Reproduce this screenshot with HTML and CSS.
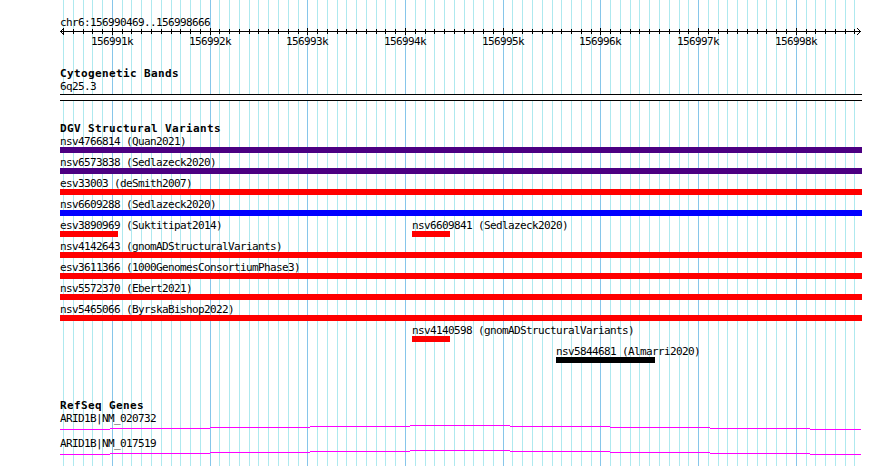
FILE: index.html
```html
<!DOCTYPE html>
<html lang="en">
<head>
	<meta charset="UTF-8">
	<title>chr6:156990469..156998666</title>
	<link rel="stylesheet" href="styles.css">
</head>
<body>
	<div class="panel">
		<!-- grid: one line per 100 bp, darker every 1 kb -->
		<svg class="grid" width="802" height="466" shape-rendering="crispEdges">
			<path class="minor" d="M3.5 0V466M13.5 0V466M23.5 0V466M32.5 0V466M42.5 0V466M62.5 0V466M71.5 0V466M81.5 0V466M91.5 0V466M101.5 0V466M111.5 0V466M120.5 0V466M130.5 0V466M140.5 0V466M159.5 0V466M169.5 0V466M179.5 0V466M189.5 0V466M198.5 0V466M208.5 0V466M218.5 0V466M228.5 0V466M238.5 0V466M257.5 0V466M267.5 0V466M277.5 0V466M286.5 0V466M296.5 0V466M306.5 0V466M316.5 0V466M325.5 0V466M335.5 0V466M355.5 0V466M365.5 0V466M374.5 0V466M384.5 0V466M394.5 0V466M404.5 0V466M413.5 0V466M423.5 0V466M433.5 0V466M452.5 0V466M462.5 0V466M472.5 0V466M482.5 0V466M492.5 0V466M501.5 0V466M511.5 0V466M521.5 0V466M531.5 0V466M550.5 0V466M560.5 0V466M570.5 0V466M579.5 0V466M589.5 0V466M599.5 0V466M609.5 0V466M619.5 0V466M628.5 0V466M648.5 0V466M658.5 0V466M667.5 0V466M677.5 0V466M687.5 0V466M697.5 0V466M706.5 0V466M716.5 0V466M726.5 0V466M746.5 0V466M755.5 0V466M765.5 0V466M775.5 0V466M785.5 0V466M794.5 0V466"/>
			<path class="major" d="M52.5 0V466M150.5 0V466M247.5 0V466M345.5 0V466M443.5 0V466M540.5 0V466M638.5 0V466M736.5 0V466"/>
		</svg>

		<div class="ruler">
			<div class="ruler-title">chr6:156990469..156998666</div>
			<svg class="scale" width="802" height="22">
				<g shape-rendering="crispEdges">
					<path d="M0 5.5H801"/>
					<path d="M3.5 3v5M13.5 3v5M23.5 3v5M32.5 3v5M42.5 3v5M62.5 3v5M71.5 3v5M81.5 3v5M91.5 3v5M101.5 3v5M111.5 3v5M120.5 3v5M130.5 3v5M140.5 3v5M159.5 3v5M169.5 3v5M179.5 3v5M189.5 3v5M198.5 3v5M208.5 3v5M218.5 3v5M228.5 3v5M238.5 3v5M257.5 3v5M267.5 3v5M277.5 3v5M286.5 3v5M296.5 3v5M306.5 3v5M316.5 3v5M325.5 3v5M335.5 3v5M355.5 3v5M365.5 3v5M374.5 3v5M384.5 3v5M394.5 3v5M404.5 3v5M413.5 3v5M423.5 3v5M433.5 3v5M452.5 3v5M462.5 3v5M472.5 3v5M482.5 3v5M492.5 3v5M501.5 3v5M511.5 3v5M521.5 3v5M531.5 3v5M550.5 3v5M560.5 3v5M570.5 3v5M579.5 3v5M589.5 3v5M599.5 3v5M609.5 3v5M619.5 3v5M628.5 3v5M648.5 3v5M658.5 3v5M667.5 3v5M677.5 3v5M687.5 3v5M697.5 3v5M706.5 3v5M716.5 3v5M726.5 3v5M746.5 3v5M755.5 3v5M765.5 3v5M775.5 3v5M785.5 3v5M794.5 3v5"/>
					<path d="M52.5 2v7M150.5 2v7M247.5 2v7M345.5 2v7M443.5 2v7M540.5 2v7M638.5 2v7M736.5 2v7"/>
				</g>
				<path class="arrow" d="M4 2L0.5 5.5L4 9M797 2L800.5 5.5L797 9"/>
				<text x="52" y="19">156991k</text>
				<text x="150" y="19">156992k</text>
				<text x="247" y="19">156993k</text>
				<text x="345" y="19">156994k</text>
				<text x="443" y="19">156995k</text>
				<text x="540" y="19">156996k</text>
				<text x="638" y="19">156997k</text>
				<text x="736" y="19">156998k</text>
			</svg>
		</div>

		<section class="track cyto">
			<h2>Cytogenetic Bands</h2>
			<div class="label">6q25.3</div>
			<div class="band"></div>
		</section>

		<section class="track dgv">
			<h2>DGV Structural Variants</h2>
			<div class="row">
				<div class="feature" style="left:0;width:802px"><div class="label">nsv4766814 (Quan2021)</div><div class="bar indigo"></div></div>
			</div>
			<div class="row">
				<div class="feature" style="left:0;width:802px"><div class="label">nsv6573838 (Sedlazeck2020)</div><div class="bar indigo"></div></div>
			</div>
			<div class="row">
				<div class="feature" style="left:0;width:802px"><div class="label">esv33003 (deSmith2007)</div><div class="bar red"></div></div>
			</div>
			<div class="row">
				<div class="feature" style="left:0;width:802px"><div class="label">nsv6609288 (Sedlazeck2020)</div><div class="bar blue"></div></div>
			</div>
			<div class="row">
				<div class="feature" style="left:0;width:58px"><div class="label">esv3890969 (Suktitipat2014)</div><div class="bar red"></div></div>
				<div class="feature" style="left:352px;width:38px"><div class="label">nsv6609841 (Sedlazeck2020)</div><div class="bar red"></div></div>
			</div>
			<div class="row">
				<div class="feature" style="left:0;width:802px"><div class="label">nsv4142643 (gnomADStructuralVariants)</div><div class="bar red"></div></div>
			</div>
			<div class="row">
				<div class="feature" style="left:0;width:802px"><div class="label">esv3611366 (1000GenomesConsortiumPhase3)</div><div class="bar red"></div></div>
			</div>
			<div class="row">
				<div class="feature" style="left:0;width:802px"><div class="label">nsv5572370 (Ebert2021)</div><div class="bar red"></div></div>
			</div>
			<div class="row">
				<div class="feature" style="left:0;width:802px"><div class="label">nsv5465066 (ByrskaBishop2022)</div><div class="bar red"></div></div>
			</div>
			<div class="row">
				<div class="feature" style="left:352px;width:38px"><div class="label">nsv4140598 (gnomADStructuralVariants)</div><div class="bar red"></div></div>
			</div>
			<div class="row">
				<div class="feature" style="left:496px;width:99px"><div class="label">nsv5844681 (Almarri2020)</div><div class="bar black"></div></div>
			</div>
		</section>

		<section class="track refseq">
			<h2>RefSeq Genes</h2>
			<div class="gene">
				<div class="label">ARID1B|NM_020732</div>
				<svg class="hat" width="802" height="12" shape-rendering="crispEdges"><path d="M0 4.5h50M50 3.5h100M150 2.5h100M250 1.5h100M350 0.5h100M450 1.5h100M550 2.5h100M650 3.5h100M750 4.5h51"/></svg>
			</div>
			<div class="gene">
				<div class="label">ARID1B|NM_017519</div>
				<svg class="hat" width="802" height="12" shape-rendering="crispEdges"><path d="M0 4.5h50M50 3.5h100M150 2.5h100M250 1.5h100M350 0.5h100M450 1.5h100M550 2.5h100M650 3.5h100M750 4.5h51"/></svg>
			</div>
		</section>
	</div>
</body>
</html>
```

FILE: styles.css
```css
html {
	background-color: #fff;
}
body {
	margin: 0;
	font-family: "DejaVu Sans Mono", "Liberation Mono", monospace;
	font-size: 11px;
	letter-spacing: -0.62px;
	color: #000;
}
.panel {
	position: relative;
	margin-left: 60px;
	width: 802px;
	height: 466px;
}
.grid {
	position: absolute;
	top: 0;
	left: 0;
}
.grid .minor {
	stroke: #aee9ef;
	stroke-width: 1;
}
.grid .major {
	stroke: #86c6ea;
	stroke-width: 1;
}

/* ruler */
.ruler {
	position: relative;
	padding-top: 16px;
}
.ruler-title {
	line-height: 13px;
	white-space: nowrap;
}
.scale {
	display: block;
	margin-top: -3px;
	overflow: visible;
}
.scale path {
	stroke: #000;
	stroke-width: 1;
	fill: none;
}
.scale text {
	font-family: "DejaVu Sans Mono", monospace;
	font-size: 11px;
	letter-spacing: -0.62px;
	text-anchor: middle;
	fill: #000;
}

/* tracks */
.track {
	position: relative;
}
.track h2 {
	margin: 0;
	font-size: 11px;
	font-weight: bold;
	letter-spacing: 0.38px;
	line-height: 13px;
	white-space: nowrap;
}
.label {
	line-height: 13px;
	white-space: nowrap;
}
.cyto {
	margin-top: 19px;
}
.band {
	height: 7px;
	box-sizing: border-box;
	margin-top: 1px;
	border-top: 1px solid #000;
	border-bottom: 1px solid #000;
	background-color: #fff;
}
.dgv {
	margin-top: 21px;
}
.row {
	position: relative;
	height: 21px;
}
.feature {
	position: absolute;
	top: 0;
	height: 21px;
}
.bar {
	position: absolute;
	top: 12px;
	left: 0;
	right: 0;
	height: 6px;
}
.indigo { background-color: #4b0082; }
.red { background-color: #ff0000; }
.blue { background-color: #0000ff; }
.black { background-color: #000; }

.refseq {
	margin-top: 33px;
}
.gene {
	height: 25px;
}
.hat {
	display: block;
}
.hat path {
	stroke: #ff00ff;
	stroke-width: 1;
	fill: none;
}
```
